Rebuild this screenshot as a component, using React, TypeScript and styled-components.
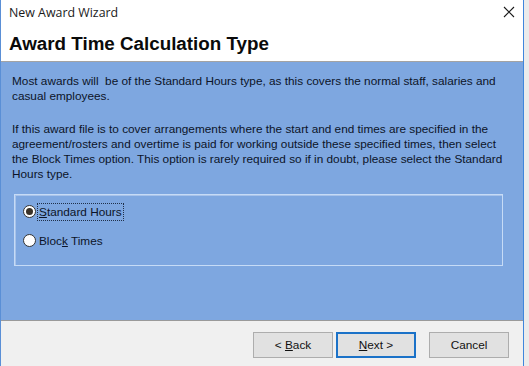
import styled, { createGlobalStyle, css } from "styled-components";

const GlobalStyle = createGlobalStyle`
	html, body {
		margin: 0;
		padding: 0;
		background: #ebebeb;
	}
`;

const UI_FONT = `"Liberation Sans", Arial, sans-serif`;

const Window = styled.div`
	width: 522px;
	height: 366px;
	display: flex;
	flex-direction: column;
	border-left: 1px solid #5a8fd6;
	border-right: 1px solid #3f86dc;
	background: #ffffff;
	font-family: ${UI_FONT};
	overflow: hidden;
`;

const TitleBar = styled.div`
	height: 30px;
	display: flex;
	align-items: center;
	justify-content: space-between;
	padding: 0 7px 0 8px;
	background: #ffffff;
`;

const TitleText = styled.span`
	font-family: "Open Sans", sans-serif;
	font-size: 12.4px;
	color: #1a1a1a;
	margin-top: -6px;
`;

const CloseButton = styled.div`
	width: 14px;
	height: 14px;
	margin-top: -6px;
	display: flex;
	align-items: center;
	justify-content: center;
`;

const Header = styled.div`
	height: 31px;
	display: flex;
	align-items: center;
	padding-left: 8px;
	background: #ffffff;
	border-bottom: 1px solid #a3a3a3;
`;

const HeaderTitle = styled.h1`
	margin: -3px 0 0;
	font-family: ${UI_FONT};
	font-size: 18.8px;
	font-weight: bold;
	color: #0a0a0a;
`;

const Content = styled.div`
	flex: 1;
	background: #7ea7e0;
	padding: 12px 12px 0 11px;
	display: flex;
	flex-direction: column;
`;

const Paragraph = styled.p<{ last?: boolean }>`
	margin: 0 0 ${({ last }) => (last ? "12px" : "18px")};
	font-size: 11.8px;
	line-height: 15px;
	color: #0c1428;
`;

const GroupBox = styled.div`
	margin: 0 8px 0 2px;
	height: 72px;
	box-sizing: border-box;
	border: 1px solid #c6dbf6;
	box-shadow: inset 1px 1px 0 #a8c3ea;
	display: flex;
	flex-direction: column;
	gap: 16px;
	padding: 10px 0 0 8px;
`;

const RadioRow = styled.label`
	display: flex;
	align-items: center;
	gap: 1px;
	font-size: 11.8px;
	color: #0c1428;
	height: 13px;
`;

const RadioCircle = styled.span<{ checked?: boolean }>`
	width: 11px;
	height: 11px;
	border-radius: 50%;
	border: 1px solid #333;
	background: #ffffff;
	display: flex;
	align-items: center;
	justify-content: center;
	${({ checked }) =>
		checked &&
		css`
			&::after {
				content: "";
				width: 7px;
				height: 7px;
				border-radius: 50%;
				background: #3a3228;
			}
		`}
`;

const RadioLabel = styled.span<{ focused?: boolean }>`
	padding: 1px 1px;
	border: 1px dotted ${({ focused }) => (focused ? "#20304a" : "transparent")};
`;

const Footer = styled.div`
	height: 46px;
	box-sizing: border-box;
	background: #f0f0f0;
	border-top: 1px solid #9a9a9a;
	display: flex;
	justify-content: flex-end;
	align-items: flex-start;
	padding: 11px 14px 0 0;
`;

const Button = styled.button<{ primary?: boolean; spaced?: boolean }>`
	width: 80px;
	height: 26px;
	box-sizing: border-box;
	font-family: ${UI_FONT};
	font-size: 11.8px;
	color: #111;
	background: #e1e1e1;
	border: 1px solid #adadad;
	margin-left: ${({ spaced }) => (spaced ? "13px" : "3px")};
	padding: 0;
	${({ primary }) =>
		primary &&
		css`
			border: 2px solid #1b72c8;
		`}
`;

const U = styled.span`
	text-decoration: underline;
`;

export default function App() {
	return (
		<>
			<GlobalStyle />
			<Window>
				<TitleBar>
					<TitleText>New Award Wizard</TitleText>
					<CloseButton>
						<svg width="12" height="12" viewBox="0 0 12 12">
							<path d="M1 1 L11 11 M11 1 L1 11" stroke="#1a1a1a" strokeWidth="1.1" />
						</svg>
					</CloseButton>
				</TitleBar>
				<Header>
					<HeaderTitle>Award Time Calculation Type</HeaderTitle>
				</Header>
				<Content>
					<Paragraph>
						Most awards will&nbsp; be of the Standard Hours type, as this covers the normal staff, salaries and
						casual employees.
					</Paragraph>
					<Paragraph last>
						If this award file is to cover arrangements where the start and end times are specified in the
						agreement/rosters and overtime is paid for working outside these specified times, then select the
						Block Times option. This option is rarely required so if in doubt, please select the Standard Hours
						type.
					</Paragraph>
					<GroupBox>
						<RadioRow>
							<RadioCircle checked />
							<RadioLabel focused>
								<U>S</U>tandard Hours
							</RadioLabel>
						</RadioRow>
						<RadioRow>
							<RadioCircle />
							<RadioLabel>
								Bloc<U>k</U> Times
							</RadioLabel>
						</RadioRow>
					</GroupBox>
				</Content>
				<Footer>
					<Button>
						&lt; <U>B</U>ack
					</Button>
					<Button primary>
						<U>N</U>ext &gt;
					</Button>
					<Button spaced>Cancel</Button>
				</Footer>
			</Window>
		</>
	);
}
